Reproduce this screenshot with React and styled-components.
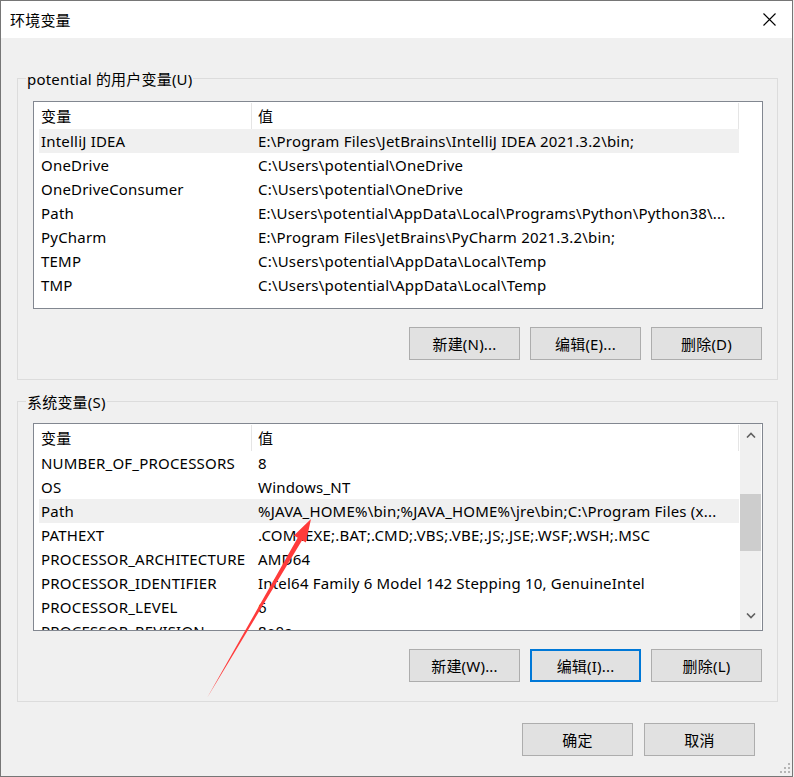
import styled, { createGlobalStyle } from "styled-components";

const userVars = [
  ["IntelliJ IDEA", "E:\\Program Files\\JetBrains\\IntelliJ IDEA 2021.3.2\\bin;"],
  ["OneDrive", "C:\\Users\\potential\\OneDrive"],
  ["OneDriveConsumer", "C:\\Users\\potential\\OneDrive"],
  ["Path", "E:\\Users\\potential\\AppData\\Local\\Programs\\Python\\Python38\\..."],
  ["PyCharm", "E:\\Program Files\\JetBrains\\PyCharm 2021.3.2\\bin;"],
  ["TEMP", "C:\\Users\\potential\\AppData\\Local\\Temp"],
  ["TMP", "C:\\Users\\potential\\AppData\\Local\\Temp"],
];

const systemVars = [
  ["NUMBER_OF_PROCESSORS", "8"],
  ["OS", "Windows_NT"],
  ["Path", "%JAVA_HOME%\\bin;%JAVA_HOME%\\jre\\bin;C:\\Program Files (x..."],
  ["PATHEXT", ".COM;.EXE;.BAT;.CMD;.VBS;.VBE;.JS;.JSE;.WSF;.WSH;.MSC"],
  ["PROCESSOR_ARCHITECTURE", "AMD64"],
  ["PROCESSOR_IDENTIFIER", "Intel64 Family 6 Model 142 Stepping 10, GenuineIntel"],
  ["PROCESSOR_LEVEL", "6"],
  ["PROCESSOR_REVISION", "8e0a"],
];

function VarList({ rows, selected, scroll, gap }) {
  return (
    <ListView $gap={gap}>
      <ListContent>
        <HeaderRow>
          <NameCell>变量</NameCell>
          <ValueCell>值</ValueCell>
        </HeaderRow>
        {rows.map(([name, value], i) => (
          <Row key={name + i} $selected={i === selected}>
            <NameCell>{name}</NameCell>
            <ValueCell>{value}</ValueCell>
          </Row>
        ))}
      </ListContent>
      {scroll && (
        <ScrollBar>
          <ScrollButton>
            <svg width="10" height="6" viewBox="0 0 10 6">
              <path d="M1 5.5 L5 1.5 L9 5.5" fill="none" stroke="#606060" strokeWidth="1.6" />
            </svg>
          </ScrollButton>
          <ScrollTrack>
            <Thumb />
          </ScrollTrack>
          <ScrollButton $down>
            <svg width="10" height="6" viewBox="0 0 10 6">
              <path d="M1 0.5 L5 4.5 L9 0.5" fill="none" stroke="#606060" strokeWidth="1.6" />
            </svg>
          </ScrollButton>
        </ScrollBar>
      )}
    </ListView>
  );
}

export default function App() {
  return (
    <>
      <GlobalStyle />
      <Window>
        <TitleBar>
          <Title>环境变量</Title>
          <CloseButton>
            <svg width="13" height="13" viewBox="0 0 13 13">
              <path d="M0.5 0.5 L12.5 12.5 M12.5 0.5 L0.5 12.5" stroke="#000" strokeWidth="1.1" />
            </svg>
          </CloseButton>
        </TitleBar>
        <Body>
          <Group $first>
            <GroupLabel>potential 的用户变量(U)</GroupLabel>
            <VarList rows={userVars} selected={0} gap={12} />
            <ButtonRow>
              <Button>新建(N)...</Button>
              <Button>编辑(E)...</Button>
              <Button>删除(D)</Button>
            </ButtonRow>
          </Group>
          <Group>
            <GroupLabel>系统变量(S)</GroupLabel>
            <VarList rows={systemVars} selected={2} scroll gap={11} />
            <ButtonRow>
              <Button>新建(W)...</Button>
              <Button $focused>编辑(I)...</Button>
              <Button>删除(L)</Button>
            </ButtonRow>
          </Group>
          <Footer>
            <Button>确定</Button>
            <Button>取消</Button>
          </Footer>
        </Body>
        <Annotation width="793" height="777" viewBox="0 0 793 777">
          <polygon
            points="207,698 297.7,537.7 293.9,535.5 311,519 305.9,542.5 302.1,540.3"
            fill="#ff3b3b"
          />
        </Annotation>
        <Grip width="10" height="10" viewBox="0 0 10 10">
          <rect x="8" y="0" width="2" height="2" fill="#b5b5b5" />
          <rect x="4" y="4" width="2" height="2" fill="#b5b5b5" />
          <rect x="8" y="4" width="2" height="2" fill="#b5b5b5" />
          <rect x="0" y="8" width="2" height="2" fill="#b5b5b5" />
          <rect x="4" y="8" width="2" height="2" fill="#b5b5b5" />
          <rect x="8" y="8" width="2" height="2" fill="#b5b5b5" />
        </Grip>
      </Window>
    </>
  );
}

const GlobalStyle = createGlobalStyle`
  html, body {
    margin: 0;
    padding: 0;
    background: #f0f0f0;
  }
  body {
    font-family: "Noto Sans", "Noto Sans CJK SC", sans-serif;
    font-size: 15px;
    letter-spacing: 0.2px;
    color: #000;
  }
`;

const Window = styled.div`
  position: relative;
  width: 793px;
  height: 777px;
  box-sizing: border-box;
  border: 1px solid #767676;
  background: #f0f0f0;
  display: flex;
  flex-direction: column;
  overflow: hidden;
`;

const TitleBar = styled.div`
  height: 37px;
  flex: none;
  background: #fff;
  display: flex;
  align-items: center;
  justify-content: space-between;
  padding-left: 9px;
`;

const Title = styled.div`
  font-size: 15px;
  line-height: 20px;
`;

const CloseButton = styled.div`
  width: 46px;
  height: 37px;
  display: flex;
  align-items: center;
  justify-content: center;
`;

const Body = styled.div`
  display: flex;
  flex-direction: column;
  padding: 0 14px 0 16px;
`;

const Group = styled.div`
  margin-top: ${(p) => (p.$first ? "40px" : "21px")};
  border: 1px solid #dcdcdc;
  padding: 0 14px 19px 15px;
  display: flex;
  flex-direction: column;
`;

const GroupLabel = styled.div`
  align-self: flex-start;
  margin: -10px 0 0 -7px;
  padding: 0 1px;
  line-height: 20px;
  background: #f0f0f0;
`;

const ListView = styled.div`
  margin-top: ${(p) => p.$gap}px;
  height: 208px;
  box-sizing: border-box;
  border: 1px solid #828790;
  background: #fff;
  display: flex;
  overflow: hidden;
`;

const ListContent = styled.div`
  width: 700px;
  flex: none;
  margin-left: 5px;
  padding-top: 1px;
  display: flex;
  flex-direction: column;
`;

const HeaderRow = styled.div`
  display: grid;
  grid-template-columns: 213px 1fr;
  height: 26px;
  line-height: 26px;
  flex: none;
  border-right: 1px solid #e5e5e5;

  & > div:first-child {
    border-right: 1px solid #e5e5e5;
  }
`;

const Row = styled.div`
  display: grid;
  grid-template-columns: 213px 1fr;
  height: 24px;
  line-height: 24px;
  flex: none;
  background: ${(p) => (p.$selected ? "#f0f0f0" : "transparent")};
`;

const NameCell = styled.div`
  padding-left: 2px;
  white-space: nowrap;
  overflow: hidden;
`;

const ValueCell = styled.div`
  padding-left: 6px;
  white-space: nowrap;
  overflow: hidden;
`;

const ScrollBar = styled.div`
  margin-left: auto;
  margin-right: 1px;
  width: 21px;
  flex: none;
  background: #f0f0f0;
  display: flex;
  flex-direction: column;
`;

const ScrollButton = styled.div`
  height: 21px;
  flex: none;
  display: flex;
  align-items: center;
  justify-content: center;
  padding-bottom: ${(p) => (p.$down ? "4px" : "0")};
`;

const ScrollTrack = styled.div`
  flex: 1;
`;

const Thumb = styled.div`
  margin-top: 49px;
  height: 57px;
  background: #cdcdcd;
`;

const ButtonRow = styled.div`
  margin-top: 18px;
  padding-right: 1px;
  display: flex;
  justify-content: flex-end;
  gap: 10px;
`;

const Footer = styled.div`
  margin-top: 21px;
  padding-right: 23px;
  display: flex;
  justify-content: flex-end;
  gap: 11px;
`;

const Button = styled.div`
  width: 111px;
  height: 33px;
  box-sizing: border-box;
  background: #e1e1e1;
  border: ${(p) => (p.$focused ? "2px solid #0078d7" : "1px solid #adadad")};
  display: flex;
  align-items: center;
  justify-content: center;
  font-size: 15px;
`;

const Annotation = styled.svg`
  position: absolute;
  left: -1px;
  top: -1px;
  pointer-events: none;
`;

const Grip = styled.svg`
  position: absolute;
  right: 2px;
  bottom: 3px;
`;
